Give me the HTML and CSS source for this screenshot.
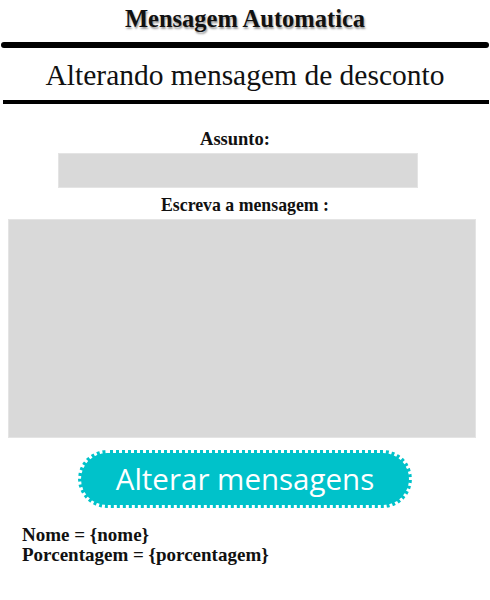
FILE: index.html
```html
<!DOCTYPE html>
<html lang="pt">
<head>
<meta charset="utf-8">
<link rel="stylesheet" href="styles.css">
</head>
<body>
<div class="page">
  <h1 class="title">Mensagem Automatica</h1>
  <div class="rule-thick"></div>
  <h2 class="subtitle">Alterando mensagem de desconto</h2>
  <div class="rule-thin"></div>
  <form class="form">
    <label class="label label-subject">Assunto:</label>
    <input class="subject" type="text">
    <label class="label label-msg">Escreva a mensagem :</label>
    <textarea class="message"></textarea>
    <button class="btn" type="button">Alterar mensagens</button>
  </form>
  <div class="vars">
    <div>Nome = {nome}</div>
    <div>Porcentagem = {porcentagem}</div>
  </div>
</div>
</body>
</html>
```
FILE: styles.css
```css
* { box-sizing: border-box; }
html, body { margin: 0; padding: 0; background: #fff; }
body { font-family: "Liberation Serif", "DejaVu Serif", serif; color: #111; }
.page { width: 490px; display: flex; flex-direction: column; }
.title {
  margin: 4px 0 0;
  text-align: center;
  font-size: 24.5px;
  font-weight: bold;
  line-height: 30px;
  color: #111;
  text-shadow: 1px 2px 2px #999;
}
.rule-thick {
  margin: 8px 1px 0 1px;
  height: 6px;
  background: #000;
  border-radius: 3px;
}
.subtitle {
  margin: 5px 0 0;
  text-align: center;
  font-weight: normal;
  font-size: 29.5px;
  line-height: 44px;
  color: #111;
}
.rule-thin {
  margin: 3px 1px 0 3px;
  height: 4px;
  background: #000;
}
.form { display: flex; flex-direction: column; align-items: center; }
.label { font-weight: bold; color: #111; }
.label-subject { margin-top: 25px; margin-right: 20px; font-size: 18.5px; line-height: 20px; }
.subject {
  margin-top: 4px;
  align-self: flex-start;
  margin-left: 58px;
  width: 360px;
  height: 35px;
  background: #d9d9d9;
  border: 1px solid #e4e4e4;
  border-radius: 0;
  outline: none;
}
.label-msg { margin-top: 7px; font-size: 17.8px; line-height: 20px; }
.message {
  margin-top: 4px;
  align-self: flex-start;
  margin-left: 8px;
  width: 468px;
  height: 219px;
  background: #d9d9d9;
  border: 1px solid #e4e4e4;
  resize: none;
  outline: none;
}
.btn {
  margin-top: 12px;
  width: 334px;
  height: 58px;
  background: #00c2ca;
  border: 3px dotted #fff;
  border-radius: 29px;
  color: #fff;
  font-family: "Open Sans", sans-serif;
  font-size: 29.5px;
  line-height: 1;
  padding: 0;
}
.vars {
  margin: 17px 0 0 22px;
  font-size: 19px;
  font-weight: bold;
  line-height: 20px;
  color: #111;
}
```
